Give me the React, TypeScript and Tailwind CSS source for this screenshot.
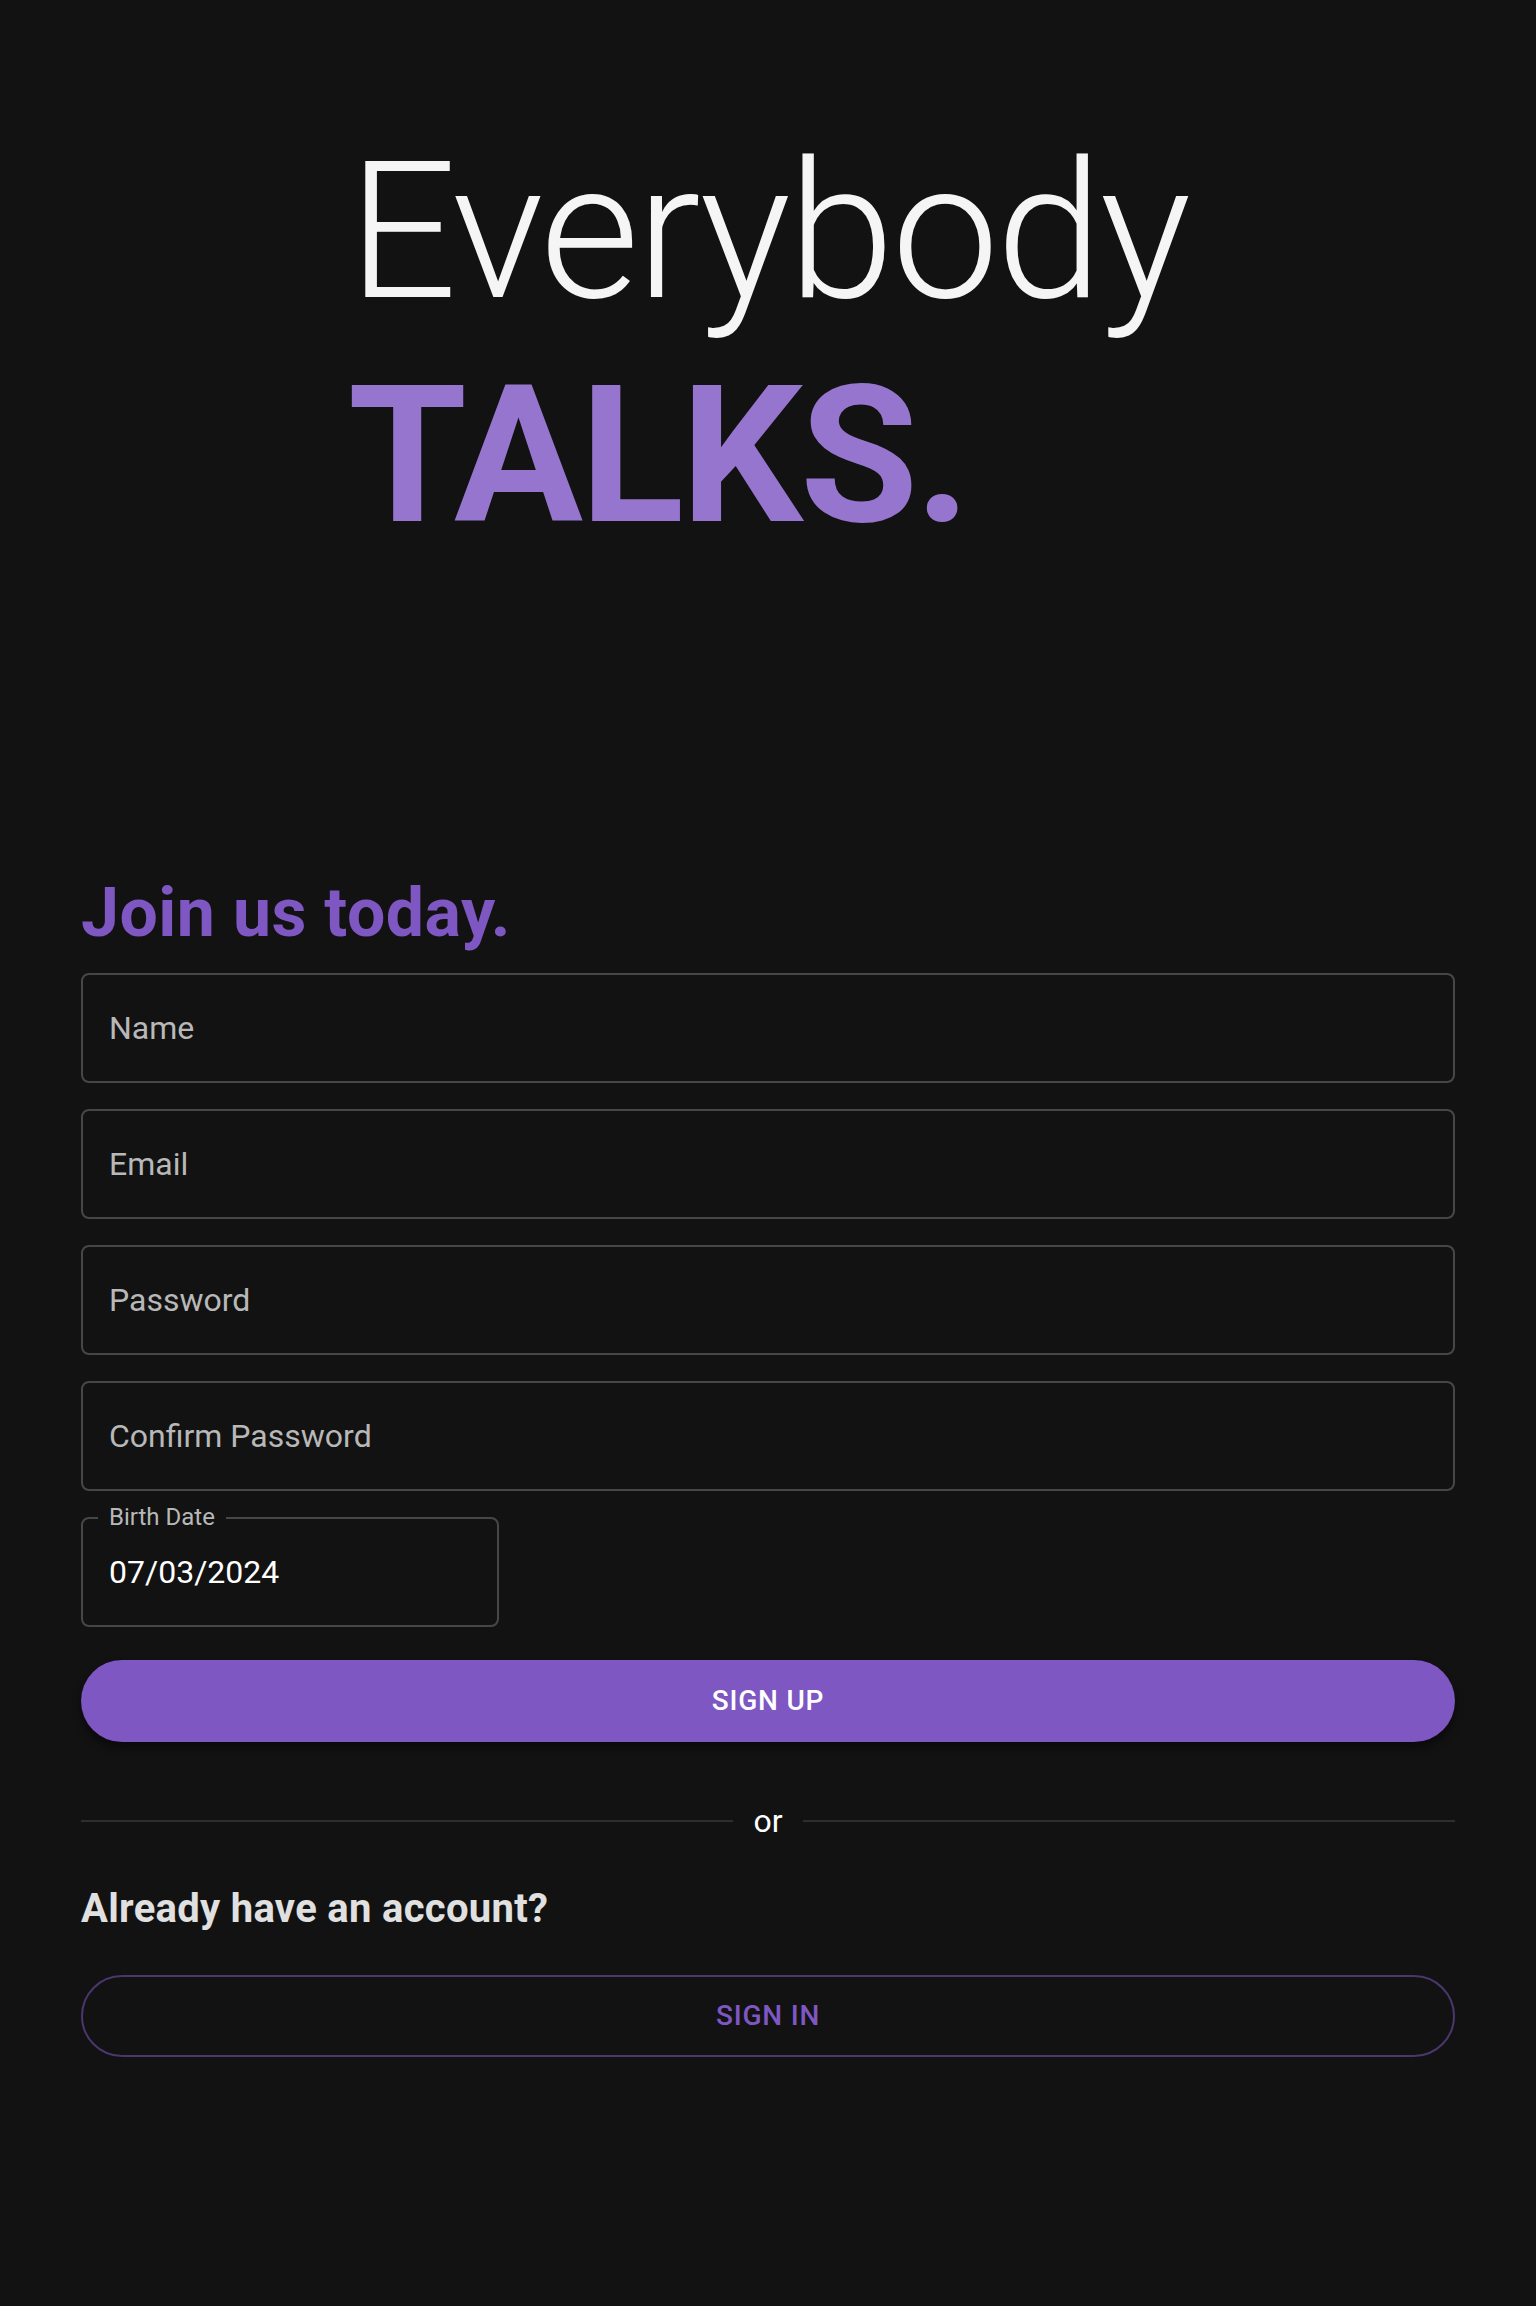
const textFields: { placeholder: string; type: string }[] = [
  { placeholder: "Name", type: "text" },
  { placeholder: "Email", type: "email" },
  { placeholder: "Password", type: "password" },
  { placeholder: "Confirm Password", type: "password" },
];

export default function App() {
  return (
    <div className="min-h-screen bg-[#121212] pb-[249px] font-['Roboto',sans-serif] text-white">

      {/* HERO */}
      <div className="flex justify-center pt-[120px]">
        <h1 className="text-[192px] leading-[224px] tracking-[-3px]">
          <span className="block font-light text-[#f5f5f5]">Everybody</span>
          <span className="block font-bold text-[#9575cd]">TALKS.</span>
        </h1>
      </div>

      {/* SIGN UP FORM */}
      <div className="mx-auto mt-[303px] flex w-[1374px] flex-col">
        <h2 className="text-[68px] font-bold leading-[84px] tracking-[0.5px] text-[#7e57c2]">Join us today.</h2>

        <div className="mt-[18px] flex flex-col gap-[26px]">
          {textFields.map((field) => (
            <input
              key={field.placeholder}
              type={field.type}
              placeholder={field.placeholder}
              className="h-[110px] w-full rounded-lg border-2 border-[#474747] bg-transparent px-[26px] text-[32px] text-white outline-none placeholder:text-[#b8b8b8]"
            />
          ))}

          {/* BIRTH DATE */}
          <div className="relative w-[418px]">
            <input
              type="text"
              defaultValue="07/03/2024"
              className="h-[110px] w-full rounded-lg border-2 border-[#474747] bg-transparent px-[26px] text-[32px] text-white outline-none"
            />
            <span className="absolute left-[17px] top-[-15px] bg-[#121212] px-[11px] text-[24px] leading-[30px] text-[#b8b8b8]">
              Birth Date
            </span>
          </div>
        </div>

        {/* SIGN UP BUTTON */}
        <button className="mt-[33px] flex h-[82px] w-full items-center justify-center rounded-full bg-[#7e57c2] text-[28px] font-medium tracking-[0.8px] text-white shadow-[0_6px_10px_rgba(0,0,0,0.45)]">
          SIGN UP
        </button>

        {/* DIVIDER */}
        <div className="mt-[55px] flex items-center gap-[20px]">
          <div className="h-[2px] flex-1 bg-[#2e2e2e]" />
          <span className="text-[32px] leading-[48px] text-white">or</span>
          <div className="h-[2px] flex-1 bg-[#2e2e2e]" />
        </div>

        <p className="mt-[40px] text-[40px] font-bold leading-[48px] tracking-[0.3px] text-[#e0e0e0]">Already have an account?</p>

        {/* SIGN IN BUTTON */}
        <button className="mt-[42px] flex h-[82px] w-full items-center justify-center rounded-full border-2 border-[#4a3670] text-[28px] font-medium tracking-[0.8px] text-[#7e57c2]">
          SIGN IN
        </button>
      </div>
    </div>
  );
}
